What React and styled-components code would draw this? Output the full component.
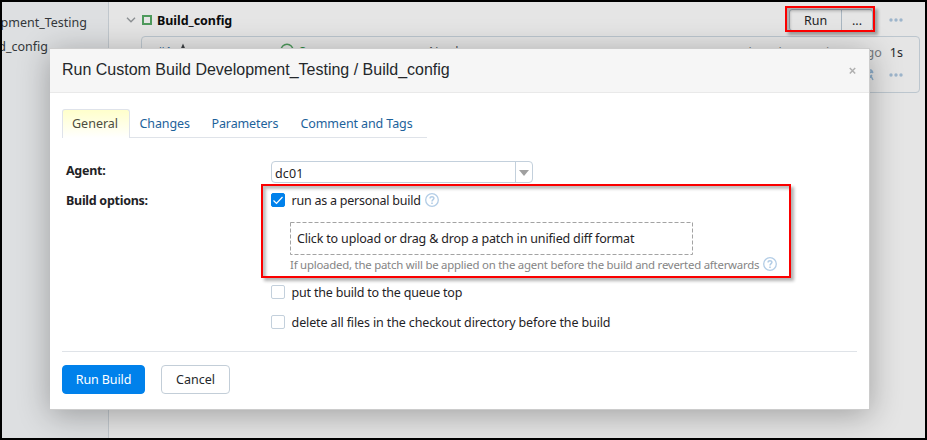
import React from "react";
import styled, { createGlobalStyle, css } from "styled-components";

const Global = createGlobalStyle`
  * { box-sizing: border-box; }
  body { margin: 0; overflow: hidden; }
`;

const Frame = styled.div`
  position: relative;
  display: flex;
  width: 927px;
  height: 440px;
  border: 2px solid #000;
  overflow: hidden;
  background: #e5e5e5;
  color: #1f2326;
  font: 12.5px/20px "Noto Sans", sans-serif;
`;

const Sidebar = styled.aside`
  width: 107px;
  flex: none;
  padding-top: 9px;
  overflow: hidden;
  background: #dddfe1;
  border-right: 1px solid #c0c7cd;
  display: flex;
  flex-direction: column;
  gap: 4px;
  color: #33373a;
`;

const SideItem = styled.div`
  display: flex;
  justify-content: flex-end;
  width: ${(p) => p.$end}px;
  height: 20px;
  padding-top: 2px;
  white-space: nowrap;
`;

const Main = styled.main`
  flex: 1;
  min-width: 0;
  padding: 7px 5px 0 17px;
`;

const BuildHeader = styled.div`
  display: flex;
  align-items: center;
  height: 22px;
`;

const BuildName = styled.span`
  margin-left: 5px;
  flex: 1;
  padding-top: 1px;
  font-weight: 700;
  color: #0b0c0d;
`;

const SplitButton = styled.div`
  display: flex;
  width: 84px;
  height: 22px;
  margin-right: 16px;
  border: 1px solid #a3b1bd;
  border-radius: 3px;
`;

const SplitPart = styled.span`
  width: ${(p) => p.$w}px;
  text-align: center;
  line-height: 21px;
  & + & { border-left: 1px solid #a9b6c1; }
`;

const BuildCard = styled.div`
  display: flex;
  margin: 5px 0 0 15px;
  height: 57px;
  border: 1px solid #bcc6ce;
  border-radius: 4px;
  padding: 5px 16px 0 15px;
`;

const Cell = styled.div`
  display: flex;
  flex: none;
  width: ${(p) => p.$w}px;
  gap: 5px;
  white-space: nowrap;
  color: ${(p) => p.$color || "#4b5054"};
`;

const Gap = styled.span`
  flex: none;
  width: ${(p) => p.$w}px;
`;

const Times = styled.div`
  display: flex;
  flex-direction: column;
  align-items: flex-end;
  flex: 1;
  gap: 2px;
  padding-top: 1px;
`;

const TimeLine = styled.div`
  display: flex;
  align-items: center;
  height: 20px;
  gap: ${(p) => p.$gap}px;
  color: #777b7e;
  b { font-weight: 400; color: #26292c; }
`;

const Modal = styled.section`
  position: absolute;
  left: 48px;
  top: 46px;
  width: 820px;
  height: 362px;
  display: flex;
  flex-direction: column;
  background: #fff;
  border: solid #ccc;
  border-width: 1px 1px 1px 0;
  box-shadow: 0 5px 30px rgba(0, 0, 0, 0.3);
`;

const ModalHeader = styled.header`
  display: flex;
  justify-content: space-between;
  height: 44px;
  padding: 0 13px 0 12px;
  background: #f6f6f6;
  border-bottom: 1px solid #e9e9e9;
`;

const Title = styled.h1`
  margin: 0;
  font: 16px/42px "Liberation Sans", Arial, sans-serif;
  color: #24282b;
`;

const Tabs = styled.nav`
  display: flex;
  width: 365px;
  height: 29px;
  margin: 16px 0 0 12px;
  border-bottom: 1px solid #dfe3e9;
`;

const Tab = styled.span`
  flex: none;
  width: ${(p) => p.$w}px;
  height: 29px;
  line-height: 29px;
  color: #1d629b;
  white-space: nowrap;
  ${(p) =>
    p.$active &&
    css`
      margin-right: 9.5px;
      padding-left: 9px;
      border: 1px solid #dfe3ea;
      border-bottom: 0;
      border-radius: 3px 3px 0 0;
      background: linear-gradient(#ffffcb, #fff);
      color: #4d4d40;
      line-height: 27px;
    `}
`;

const Form = styled.div`
  display: grid;
  grid-template-columns: 205px 1fr;
  margin: 23px 0 0 16px;
`;

const FieldLabel = styled.label`
  font-weight: 700;
  letter-spacing: -0.28px;
  line-height: 20px;
  margin-top: ${(p) => p.$mt || 0}px;
`;

const Select = styled.div`
  display: flex;
  justify-content: space-between;
  width: 262px;
  height: 22px;
  padding-left: 3px;
  border: 1px solid #c3d0dc;
  border-radius: 4px;
  line-height: 23px;
`;

const SelectArrow = styled.span`
  display: flex;
  align-items: center;
  justify-content: center;
  width: 17px;
  padding-top: 2px;
  border-left: 1px solid #c3d0dc;
`;

const Options = styled.div`
  padding-top: 7px;
  display: flex;
  flex-direction: column;
`;

const Option = styled.div`
  display: flex;
  align-items: center;
  height: 20px;
  margin-top: ${(p) => p.$mt || 0}px;
  white-space: nowrap;
`;

const Check = styled.span`
  display: flex;
  width: 14px;
  height: 14px;
  margin-right: 6.6px;
  border-radius: 2px;
  border: 1px solid ${(p) => (p.$on ? "#0081eb" : "#c3d0dc")};
  background: ${(p) => (p.$on ? "#0081eb" : "#fff")};
`;

const DropZone = styled.div`
  display: flex;
  width: 403px;
  height: 33px;
  margin: 12px 0 0 19px;
  position: relative;
  align-items: center;
  padding-left: 7px;
  white-space: nowrap;
`;

const Dashes = styled.svg`
  position: absolute;
  inset: 0;
`;

const Hint = styled.div`
  display: flex;
  align-items: center;
  height: 20px;
  margin-left: 19px;
  font-size: 11.4px;
  color: #858585;
  white-space: nowrap;
  svg { margin-bottom: 2px; }
`;

const Txt = styled.span`
  letter-spacing: ${(p) => p.$ls || 0}px;
  padding-top: ${(p) => p.$drop || 0}px;
  white-space: nowrap;
`;

const Footer = styled.footer`
  display: flex;
  gap: 16px;
  margin: auto 12px 15px;
  padding-top: 13px;
  border-top: 1px solid #dfe3e8;
`;

const Button = styled.button`
  width: ${(p) => p.$w}px;
  height: 29px;
  padding: 0;
  border: 1px solid ${(p) => (p.$primary ? "#0081eb" : "#c3ced8")};
  border-radius: 4px;
  background: ${(p) => (p.$primary ? "#0081eb" : "#fff")};
  color: ${(p) => (p.$primary ? "#fff" : "#24282b")};
  font: 12.5px/26px "Noto Sans", sans-serif;
  letter-spacing: ${(p) => (p.$primary ? -0.1 : 0)}px;
`;

const Highlight = styled.div`
  position: absolute;
  left: ${(p) => p.$x}px;
  top: ${(p) => p.$y}px;
  width: ${(p) => p.$w}px;
  height: ${(p) => p.$h}px;
  border: 2px solid #fb0000;
  box-shadow: 3px 3px 3px rgba(0, 0, 0, 0.3), inset 3px 3px 3px rgba(0, 0, 0, 0.25);
`;

const Help = () => (
  <svg width="14" height="14" viewBox="0 0 14 14" fill="none" stroke="#b3cde6">
    <circle cx="7" cy="7" r="6.3" strokeWidth="1.3" />
    <path d="M5.1 5.4C5.1 3.2 8.9 3.2 8.9 5.3C8.9 6.6 7 6.6 7 8.4" strokeWidth="1.5" />
    <path d="M7 9.5V11" strokeWidth="1.6" />
  </svg>
);

const Dots = () => (
  <svg width="14" height="4" viewBox="0 0 14 4" fill="#9db5cb">
    <circle cx="2" cy="2" r="1.7" />
    <circle cx="7" cy="2" r="1.7" />
    <circle cx="12" cy="2" r="1.7" />
  </svg>
);

export default function App() {
  return (
    <>
      <Global />
      <Frame>
        <Sidebar>
          <SideItem $end={85}><Txt>Development_Testing</Txt></SideItem>
          <SideItem $end={46}><Txt>Build_config</Txt></SideItem>
        </Sidebar>
        <Main>
          <BuildHeader>
            <svg width="10" height="6" viewBox="0 0 10 6" fill="none" stroke="#8b8f92" strokeWidth="1.4">
              <path d="M1 .8L5 4.8L9 .8" />
            </svg>
            <svg width="16" height="10" viewBox="0 0 16 10" fill="none" stroke="#4e9a5c" strokeWidth="2">
              <rect x="7" y="1" width="8" height="8" />
            </svg>
            <BuildName><Txt $ls={-0.05}>Build_config</Txt></BuildName>
            <SplitButton>
              <SplitPart $w={51}>Run</SplitPart>
              <SplitPart $w={31}>...</SplitPart>
            </SplitButton>
            <Dots />
            <Gap $w={17} />
          </BuildHeader>
          <BuildCard>
            <Cell $w={123} $color="#1f5f93">
              #1
              <svg width="12" height="14" viewBox="0 0 12 14" fill="#3c4043"><path d="M6 1.5L9 8.5H3Z" /></svg>
            </Cell>
            <Cell $w={149} $color="#2f8a43">
              <svg width="14" height="16" viewBox="0 0 14 16" fill="none" stroke="#4e9a5c" strokeWidth="1.4"><circle cx="7" cy="8.3" r="6" /></svg>
              Success
            </Cell>
            <Cell $w={100}>No changes</Cell>
            <Times>
              <TimeLine $gap={8}><Txt>less than a minute ago</Txt><b>1s</b></TimeLine>
              <TimeLine $gap={15}>
                <svg width="12" height="12" viewBox="0 0 12 12" fill="none" stroke="#8fafcb" strokeWidth="1.5"><path d="M5 1H9L11 4M5 5L11 2M5 7H9L11 11M5 11L10 6" /></svg>
                <Dots />
              </TimeLine>
            </Times>
          </BuildCard>
        </Main>

        <Modal>
          <ModalHeader>
            <Title>Run Custom Build Development_Testing / Build_config</Title>
            <svg width="7" height="44" viewBox="0 0 7 44" stroke="#b0b0b0" strokeWidth="1.5"><path d="M.8 19L6.2 24.5M6.2 19L.8 24.5" /></svg>
          </ModalHeader>
          <Tabs>
            <Tab $active $w={68}><Txt>General</Txt></Tab>
            <Tab $w={72}><Txt $ls={-0.12}>Changes</Txt></Tab>
            <Tab $w={89}><Txt $ls={-0.12}>Parameters</Txt></Tab>
            <Tab $w={113}><Txt $ls={-0.1}>Comment and Tags</Txt></Tab>
          </Tabs>
          <Form>
            <FieldLabel>Agent:</FieldLabel>
            <Select>
              <Txt $ls={0.1}>dc01</Txt>
              <SelectArrow>
                <svg width="10" height="6" viewBox="0 0 10 6" fill="#a0a0a0"><path d="M0 0H10L5 6Z" /></svg>
              </SelectArrow>
            </Select>
            <FieldLabel $mt={8}>Build options:</FieldLabel>
            <Options>
              <Option>
                <Check $on>
                  <svg width="12" height="12" viewBox="0 0 12 12" fill="none" stroke="#fff" strokeWidth="1.2"><path d="M1.5 6.5L4.5 9.5L10.5 3" /></svg>
                </Check>
                <Txt $ls={-0.24} $drop={2}>run as a personal build</Txt>
                <Gap $w={4.4} />
                <Help />
              </Option>
              <DropZone>
                <Dashes width="403" height="33" fill="none" stroke="#a3a3a3" strokeDasharray="4 2">
                  <rect x=".5" y=".5" width="402" height="32" />
                </Dashes>
                <Txt $ls={-0.17} $drop={1}>Click to upload or drag &amp; drop a patch in unified diff format</Txt>
              </DropZone>
              <Hint>
                <Txt $ls={-0.225}>If uploaded, the patch will be applied on the agent before the build and reverted afterwards</Txt>
                <Gap $w={4} />
                <Help />
              </Hint>
              <Option $mt={7}><Check /><Txt $ls={-0.2} $drop={2}>put the build to the queue top</Txt></Option>
              <Option $mt={10}><Check /><Txt $ls={-0.13} $drop={2}>delete all files in the checkout directory before the build</Txt></Option>
            </Options>
          </Form>
          <Footer>
            <Button $primary $w={83}>Run Build</Button>
            <Button $w={69}>Cancel</Button>
          </Footer>
        </Modal>
        <Highlight $x={783} $y={4} $w={90} $h={26} />
        <Highlight $x={259} $y={182} $w={530} $h={94} />
      </Frame>
    </>
  );
}
